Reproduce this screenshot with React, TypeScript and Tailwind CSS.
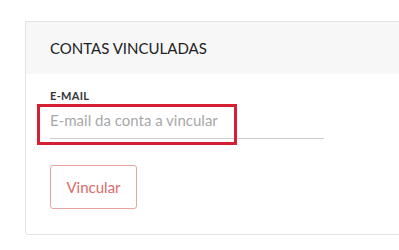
export default function App() {
  return (
    <div className="h-[250px] w-[399px] overflow-hidden bg-white pl-[25px] pt-[21px] font-['Lato','Noto_Sans',sans-serif]">
      <section className="w-[400px] rounded-bl-[3px] border border-[#e3e3e3]">
        <div className="h-[52px] bg-[#f7f7f8] pl-[24px] pt-[17px] text-[15px] leading-[18px] text-[#222]">CONTAS VINCULADAS</div>
        <div className="pl-[24px] pt-[15px] pb-[25px]">
          <label className="block text-[11px] font-bold leading-[13px] tracking-[0.03em] text-[#333]">E-MAIL</label>
          <div className="relative mt-[1px] w-[274px]">
            <input
              type="email"
              placeholder="E-mail da conta a vincular"
              className="block h-[36px] w-full border-b border-[#cfcfcf] bg-transparent pb-[2px] text-[15px] text-[#333] outline-none placeholder:text-[#a8a8a8]"
            />
            <div className="pointer-events-none absolute left-[-13px] top-[1px] h-[41px] w-[200px] border-[3px] border-[#d41f35]" />
          </div>
          <button
            type="button"
            className="mt-[26px] h-[44px] w-[87px] rounded-[3px] border border-[#e9a3a3] text-[15px] text-[#d76b6b]"
          >
            Vincular
          </button>
        </div>
      </section>
    </div>
  );
}
